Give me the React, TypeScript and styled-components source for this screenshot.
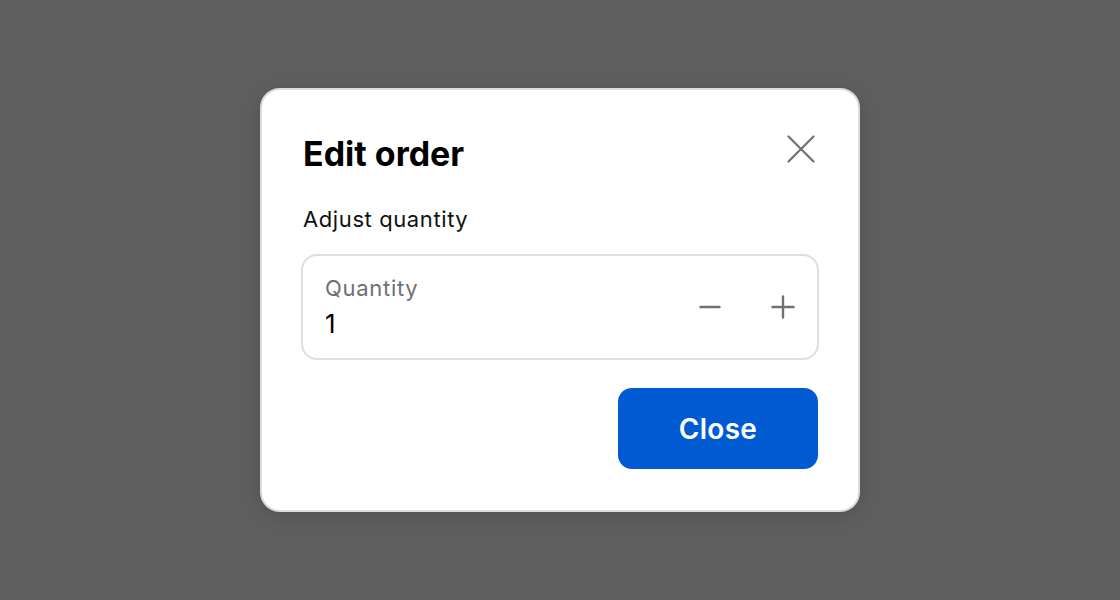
import React, {useState} from 'react'
import styled, {createGlobalStyle} from 'styled-components'

const GlobalStyle = createGlobalStyle`
	html, body {
		margin: 0;
		padding: 0;
		height: 100%;
		background: #5e5e5e;
		font-family: Inter, "Noto Sans", "Liberation Sans", sans-serif;
	}
	#root {
		height: 100%;
	}
`

const CloseIcon = () => (
	<svg width="28" height="28" viewBox="0 0 28 28" fill="none" stroke="#707070" strokeWidth="2.2" strokeLinecap="round">
		<path d="M1.5 1.5L26.5 26.5M26.5 1.5L1.5 26.5" />
	</svg>
)

const MinusIcon = () => (
	<svg width="22" height="22" viewBox="0 0 22 22" fill="none" stroke="#707070" strokeWidth="2.4" strokeLinecap="round">
		<path d="M1.5 11H20.5" />
	</svg>
)

const PlusIcon = () => (
	<svg width="24" height="24" viewBox="0 0 24 24" fill="none" stroke="#707070" strokeWidth="2.4" strokeLinecap="round">
		<path d="M1.5 12H22.5M12 1.5V22.5" />
	</svg>
)

export default function App() {
	const [quantity, setQuantity] = useState(1)

	return (
		<>
			<GlobalStyle />
			<Overlay>
				<Dialog role="dialog" aria-labelledby="dlg-title">
					<Header>
						<Title id="dlg-title">Edit order</Title>
						<CloseButton aria-label="Close"><CloseIcon /></CloseButton>
					</Header>
					<Description>Adjust quantity</Description>
					<Field>
						<FieldText>
							<FieldLabel>Quantity</FieldLabel>
							<FieldValue>{quantity}</FieldValue>
						</FieldText>
						<Stepper>
							<IconButton aria-label="Decrease" onClick={() => setQuantity(q => Math.max(0, q - 1))}><MinusIcon /></IconButton>
							<IconButton aria-label="Increase" onClick={() => setQuantity(q => q + 1)}><PlusIcon /></IconButton>
						</Stepper>
					</Field>
					<Footer>
						<PrimaryButton>Close</PrimaryButton>
					</Footer>
				</Dialog>
			</Overlay>
		</>
	)
}

const Overlay = styled.div`
	display: flex;
	justify-content: center;
	align-items: flex-start;
	height: 100%;
	padding-top: 88px;
	box-sizing: border-box;
`
const Dialog = styled.div`
	width: 600px;
	box-sizing: border-box;
	background: #fff;
	border: 2px solid #dcdcdc;
	border-radius: 20px;
	padding: 36px 40px 41px 40px;
	box-shadow: 0 4px 16px rgba(0, 0, 0, 0.12);
`
const Header = styled.div`
	display: flex;
	justify-content: space-between;
	align-items: flex-start;
`
const Title = styled.h2`
	margin: 8px 0 0 1px;
	font-size: 34px;
	font-weight: 700;
	line-height: 40px;
	color: #000;
`
const IconButton = styled.button`
	display: flex;
	align-items: center;
	justify-content: center;
	background: none;
	border: none;
	padding: 0;
	cursor: pointer;
`
const CloseButton = styled(IconButton)`
	margin: 9px 3px 0 0;
`
const Description = styled.p`
	margin: 31px 0 0 1px;
	font-size: 22px;
	letter-spacing: 0.6px;
	line-height: 28px;
	color: #111;
`
const Field = styled.div`
	display: flex;
	align-items: center;
	justify-content: space-between;
	margin: 21px -1px 0 -1px;
	height: 106px;
	box-sizing: border-box;
	border: 2px solid #dedede;
	border-radius: 16px;
	padding: 0 22px 0 22px;
`
const FieldText = styled.div`
	display: flex;
	flex-direction: column;
	gap: 6px;
`
const FieldLabel = styled.span`
	font-size: 22px;
	letter-spacing: 0.7px;
	line-height: 28px;
	color: #707070;
`
const FieldValue = styled.span`
	font-size: 26px;
	line-height: 32px;
	color: #000;
`
const Stepper = styled.div`
	display: flex;
	align-items: center;
	gap: 50px;
`
const Footer = styled.div`
	display: flex;
	justify-content: flex-end;
	margin-top: 28px;
`
const PrimaryButton = styled.button`
	width: 200px;
	height: 81px;
	border: none;
	border-radius: 14px;
	background: #005bd3;
	color: #fff;
	font-family: Inter, "Noto Sans", "Liberation Sans", sans-serif;
	font-size: 28px;
	font-weight: 600;
	letter-spacing: 0.3px;
	cursor: pointer;
`
